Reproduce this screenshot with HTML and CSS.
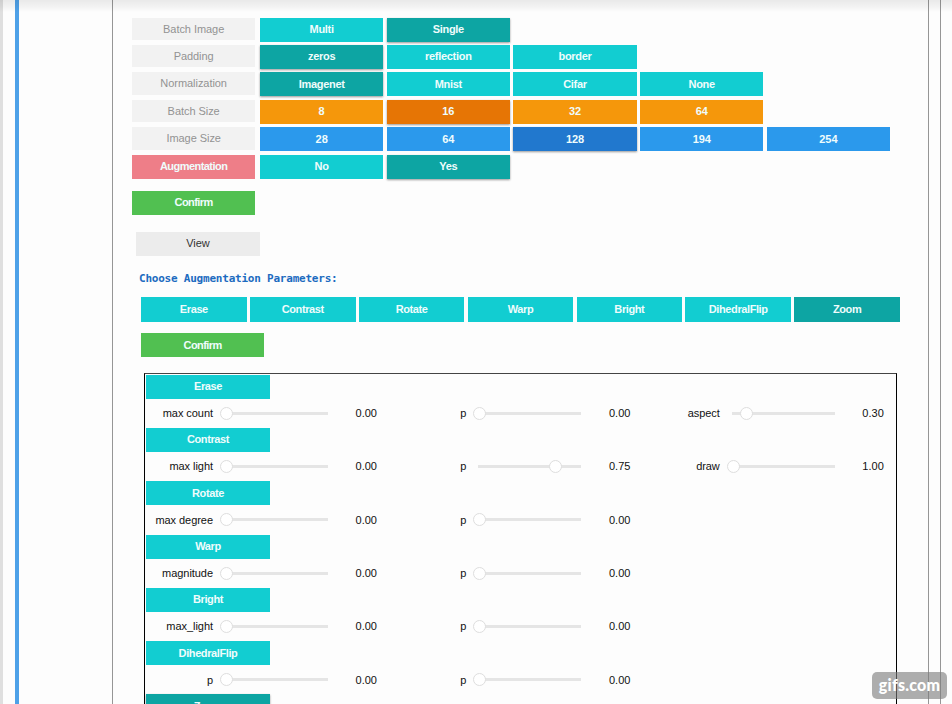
FILE: index.html
```html
<!DOCTYPE html>
<html lang="en">
<head>
<meta charset="utf-8">
<title>Data augmentation</title>
<link rel="stylesheet" href="styles.css">
</head>
<body>
<div class="notebook">
  <div class="gutter"></div>
  <div class="selection"></div>
  <div class="prompt"></div>
  <main class="output">
    <section class="settings">
      <div class="row"><span class="btn label">Batch Image</span><button class="btn cyan">Multi</button><button class="btn teal on">Single</button></div>
      <div class="row"><span class="btn label">Padding</span><button class="btn teal on">zeros</button><button class="btn cyan">reflection</button><button class="btn cyan">border</button></div>
      <div class="row"><span class="btn label">Normalization</span><button class="btn teal on">Imagenet</button><button class="btn cyan">Mnist</button><button class="btn cyan">Cifar</button><button class="btn cyan">None</button></div>
      <div class="row"><span class="btn label">Batch Size</span><button class="btn orange">8</button><button class="btn dark-orange on">16</button><button class="btn orange">32</button><button class="btn orange">64</button></div>
      <div class="row"><span class="btn label">Image Size</span><button class="btn blue">28</button><button class="btn blue">64</button><button class="btn dark-blue on">128</button><button class="btn blue">194</button><button class="btn blue">254</button></div>
      <div class="row"><button class="btn pink">Augmentation</button><button class="btn cyan">No</button><button class="btn teal on">Yes</button></div>
    </section>
    <button class="btn green confirm">Confirm</button>
    <button class="btn view">View</button>
    <h2 class="heading">Choose Augmentation Parameters:</h2>
    <div class="choices">
      <button class="btn cyan">Erase</button><button class="btn cyan">Contrast</button><button class="btn cyan">Rotate</button><button class="btn cyan">Warp</button><button class="btn cyan">Bright</button><button class="btn cyan">DihedralFlip</button><button class="btn teal">Zoom</button>
    </div>
    <button class="btn green apply">Confirm</button>
    <section class="params">
      <div class="group">
        <button class="btn cyan">Erase</button>
        <div class="sliders">
          <div class="slider"><label>max count</label><div class="track"><i style="left:-5px"></i></div><output>0.00</output></div>
          <div class="slider"><label>p</label><div class="track"><i style="left:-5px"></i></div><output>0.00</output></div>
          <div class="slider"><label>aspect</label><div class="track"><i style="left:8px"></i></div><output>0.30</output></div>
        </div>
      </div>
      <div class="group">
        <button class="btn cyan">Contrast</button>
        <div class="sliders">
          <div class="slider"><label>max light</label><div class="track"><i style="left:-5px"></i></div><output>0.00</output></div>
          <div class="slider"><label>p</label><div class="track"><i style="left:71px"></i></div><output>0.75</output></div>
          <div class="slider"><label>draw</label><div class="track"><i style="left:-5px"></i></div><output>1.00</output></div>
        </div>
      </div>
      <div class="group">
        <button class="btn cyan">Rotate</button>
        <div class="sliders">
          <div class="slider"><label>max degree</label><div class="track"><i style="left:-5px"></i></div><output>0.00</output></div>
          <div class="slider"><label>p</label><div class="track"><i style="left:-5px"></i></div><output>0.00</output></div>
        </div>
      </div>
      <div class="group">
        <button class="btn cyan">Warp</button>
        <div class="sliders">
          <div class="slider"><label>magnitude</label><div class="track"><i style="left:-5px"></i></div><output>0.00</output></div>
          <div class="slider"><label>p</label><div class="track"><i style="left:-5px"></i></div><output>0.00</output></div>
        </div>
      </div>
      <div class="group">
        <button class="btn cyan">Bright</button>
        <div class="sliders">
          <div class="slider"><label>max_light</label><div class="track"><i style="left:-5px"></i></div><output>0.00</output></div>
          <div class="slider"><label>p</label><div class="track"><i style="left:-5px"></i></div><output>0.00</output></div>
        </div>
      </div>
      <div class="group">
        <button class="btn cyan">DihedralFlip</button>
        <div class="sliders">
          <div class="slider"><label>p</label><div class="track"><i style="left:-5px"></i></div><output>0.00</output></div>
          <div class="slider"><label>p</label><div class="track"><i style="left:-5px"></i></div><output>0.00</output></div>
        </div>
      </div>
      <div class="group"><button class="btn teal on">Zoom</button></div>
    </section>
  </main>
  <div class="margin"></div>
</div>
<div class="top-shadow"></div>
<div class="badge">gifs.com</div>
</body>
</html>
```
FILE: styles.css
```css
* { box-sizing: border-box; }
body {
  margin: 0;
  height: 704px;
  overflow: hidden;
  position: relative;
  background: #fdfdfd;
  font: 11px/24px "Liberation Sans", Arial, sans-serif;
  color: #111;
}
.notebook { display: flex; height: 704px; overflow: hidden; }
.gutter { width: 15px; border-left: 3px solid #dfdfdf; }
.selection { width: 4px; background: #4ea1e8; }
.prompt { width: 93px; }
.output {
  width: 817px;
  height: 704px;
  overflow: hidden;
  border: solid #969696;
  border-width: 0 1px;
  padding: 17.5px 0 0 19px;
}
.margin { width: 12px; border-right: 1px solid #969696; }
.btn {
  display: block;
  width: 123.3px;
  height: 24px;
  margin: 0;
  padding: 0;
  border: 0;
  font: bold 11px/23px "Liberation Sans", Arial, sans-serif;
  letter-spacing: -.3px;
  text-align: center;
  color: #effcfc;
}
.settings { display: grid; gap: 3.45px; }
.row { display: flex; gap: 3.4px; }
.row > :first-child { margin-right: 1.3px; }
.row > .label { background: #f2f2f2; color: #929292; font-weight: normal; letter-spacing: -.05px; line-height: 22px; height: 22.5px; }
.cyan { background: #12cdd1; }
.teal { background: #0da5a3; }
.orange { background: #f5970b; }
.dark-orange { background: #e67505; }
.blue { background: #2b99ec; }
.dark-blue { background: #2178ce; }
.orange, .dark-orange, .blue, .dark-blue { letter-spacing: -.1px; }
.pink { background: #ee7e88; letter-spacing: -.55px; }
.green { background: #51c051; letter-spacing: -.55px; }
.on { box-shadow: 0 1px 2px rgba(0, 0, 0, .4); }
.confirm { margin-top: 12px; }
.view { width: 124px; margin: 17px 0 0 4px; background: #ececec; color: #333; font-weight: normal; letter-spacing: 0; }
.heading {
  margin: 15px 0 0 7px;
  height: 16px;
  font: bold 11px/16px "DejaVu Sans Mono", monospace;
  letter-spacing: -.22px;
  color: #1c6bc0;
}
.choices { display: flex; gap: 3.2px; margin: 10px 0 0 9px; }
.choices .btn { width: 105.7px; height: 25px; letter-spacing: -.4px; }
.apply { margin: 11px 0 0 9px; height: 24.5px; line-height: 24px; }
.params {
  width: 753px;
  height: 390px;
  margin: 15.5px 0 0 12px;
  border: 1px solid #000;
  border-top-color: #444;
  padding: 1px 0 0 1px;
}
.group { height: 53.3px; }
.group > .btn { width: 124px; letter-spacing: -.4px; }
.sliders { display: flex; height: 29px; }
.slider { display: flex; flex: none; align-items: center; width: 253.4px; }
.slider:last-child:nth-child(3) { width: 240px; }
.slider label { width: 67px; text-align: right; letter-spacing: -.05px; white-space: nowrap; }
.track { position: relative; flex: none; width: 103px; height: 3px; margin-left: 12px; background: #e5e5e5; }
.track i {
  position: absolute;
  top: -5px;
  width: 13px;
  height: 13px;
  border: 1px solid #dedede;
  border-radius: 50%;
  background: #fff;
}
.slider output { width: 49px; text-align: right; }
.top-shadow {
  position: absolute;
  inset: 0 0 auto;
  height: 12px;
  background: linear-gradient(rgba(0, 0, 0, .08), rgba(0, 0, 0, .04) 60%, transparent);
}
.badge {
  position: absolute;
  left: 872px;
  top: 672px;
  width: 75px;
  height: 27px;
  border-radius: 5px;
  background: rgba(125, 125, 125, .62);
  color: #fff;
  font: 900 16px/26px Lato, sans-serif;
  letter-spacing: .2px;
  text-align: center;
}
```
